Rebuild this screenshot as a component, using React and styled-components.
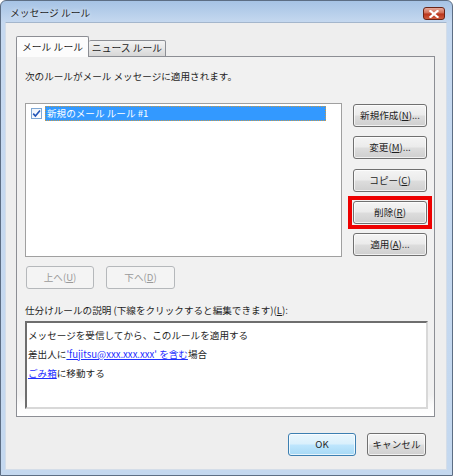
import React from 'react';
import styled, { createGlobalStyle } from 'styled-components';

const GlobalStyle = createGlobalStyle`
  html, body {
    margin: 0;
    padding: 0;
    background: #ffffff;
  }
  body {
    font-family: "Noto Sans CJK JP", "Noto Sans", sans-serif;
  }
`;

const ruleButtons = [
  { label: '新規作成', key: 'N', more: true },
  { label: '変更', key: 'M', more: true },
  { label: 'コピー', key: 'C' },
  { label: '削除', key: 'R', marked: true },
  { label: '適用', key: 'A', more: true },
];

function Mnemonic({ text, k, more }) {
  return (
    <>
      {text}(<u>{k}</u>){more ? '...' : ''}
    </>
  );
}

function App() {
  return (
    <>
      <GlobalStyle />
      <Window>
        <TitleBar>
          <Title>メッセージ ルール</Title>
          <CloseButton>
            <svg width="10" height="8" viewBox="0 0 10 8">
              <path d="M1.5 1 L8.5 7 M8.5 1 L1.5 7" stroke="#ffffff" strokeWidth="2.2" strokeLinecap="square" />
            </svg>
          </CloseButton>
        </TitleBar>

        <Client>
          <TabArea>
            <TabRow>
              <Tab $active>メール ルール</Tab>
              <Tab>ニュース ルール</Tab>
            </TabRow>

            <Panel>
              <Caption>次のルールがメール メッセージに適用されます。</Caption>

              <RulesRow>
                <ListBox>
                  <RuleItem>
                    <CheckBox>
                      <svg width="11" height="11" viewBox="0 0 11 11">
                        <path d="M2.2 5.6 L4.4 8 L9 2.4" stroke="#2255b8" strokeWidth="1.6" fill="none" />
                      </svg>
                    </CheckBox>
                    <RuleName>新規のメール ルール #1</RuleName>
                  </RuleItem>
                </ListBox>

                <SideButtons>
                  {ruleButtons.map((b) => {
                    const btn = (
                      <PushButton key={b.key} $w={74}>
                        <Mnemonic text={b.label} k={b.key} more={b.more} />
                      </PushButton>
                    );
                    return b.marked ? <Marker key={b.key}>{btn}</Marker> : btn;
                  })}
                </SideButtons>
              </RulesRow>

              <MoveRow>
                <PushButton $w={68} $variant="disabled">
                  <Mnemonic text="上へ" k="U" />
                </PushButton>
                <PushButton $w={69} $variant="disabled">
                  <Mnemonic text="下へ" k="D" />
                </PushButton>
              </MoveRow>

              <DescLabel>
                仕分けルールの説明 (下線をクリックすると編集できます)(<u>L</u>):
              </DescLabel>
              <DescBox>
                <DescLine>メッセージを受信してから、このルールを適用する</DescLine>
                <DescLine>
                  差出人に<RuleLink>'fujitsu@xxx.xxx.xxx' を含む</RuleLink>場合
                </DescLine>
                <DescLine>
                  <RuleLink>ごみ箱</RuleLink>に移動する
                </DescLine>
              </DescBox>
            </Panel>

            <Footer>
              <PushButton $w={68} $variant="primary">OK</PushButton>
              <PushButton $w={59}>キャンセル</PushButton>
            </Footer>
          </TabArea>
        </Client>
      </Window>
    </>
  );
}

const Window = styled.div`
  width: 453px;
  height: 476px;
  box-sizing: border-box;
  border: 1px solid #5d6e84;
  border-radius: 6px 6px 0 0;
  background: linear-gradient(180deg, #a6c3e5 0px, #c6d9f0 22px, #c4d8ef 100%);
  display: flex;
  flex-direction: column;
  overflow: hidden;
`;

const TitleBar = styled.div`
  height: 21px;
  display: flex;
  justify-content: space-between;
  padding: 0 7px 0 9px;
`;

const Title = styled.div`
  font-size: 9.8px;
  line-height: 21px;
  color: #1f1f1f;
  padding-top: 2px;
  text-shadow: 0 0 4px rgba(255, 255, 255, 0.9);
`;

const CloseButton = styled.div`
  width: 22px;
  height: 13px;
  margin-top: 6px;
  box-sizing: border-box;
  border: 1px solid #6a2416;
  border-radius: 3px;
  background: linear-gradient(180deg, #e7a99a 0%, #d06a52 48%, #b8321a 52%, #cf5c3e 100%);
  display: flex;
  align-items: center;
  justify-content: center;
`;

const Client = styled.div`
  flex: 1;
  margin: 0 5px 5px 4px;
  background: #eeeeee;
  border: 1px solid #d4dde8;
  border-top-color: #a4b6cc;
  box-sizing: border-box;
  padding: 13px 0 0 10px;
`;

const TabArea = styled.div`
  width: 419px;
  display: flex;
  flex-direction: column;
`;

const TabRow = styled.div`
  display: flex;
  align-items: flex-end;
  height: 21px;
  margin-bottom: -1px;
  position: relative;
  z-index: 1;
`;

const Tab = styled.div`
  box-sizing: border-box;
  width: ${(p) => (p.$active ? 73 : 77)}px;
  height: ${(p) => (p.$active ? 21 : 17)}px;
  border: 1px solid #8c8e94;
  border-bottom: ${(p) => (p.$active ? 'none' : '1px solid #8c8e94')};
  border-left: ${(p) => (p.$active ? '1px solid #8c8e94' : 'none')};
  background: ${(p) =>
    p.$active ? '#fcfcfc' : 'linear-gradient(180deg, #f3f3f3 0%, #e6e6e6 50%, #d7d7d7 100%)'};
  border-radius: 2px 2px 0 0;
  font-size: 9.8px;
  line-height: ${(p) => (p.$active ? 20 : 15)}px;
  color: #1e1e1e;
  text-align: center;
`;

const Panel = styled.div`
  box-sizing: border-box;
  height: 361px;
  border: 1px solid #8c8e94;
  background: linear-gradient(180deg, #f1f1f1 0%, #f1f1f1 94%, #fbfbfb 97%, #ffffff 100%);
  padding: 12px 7px 7px 8px;
  display: flex;
  flex-direction: column;
`;

const Caption = styled.div`
  font-size: 9.6px;
  line-height: 14px;
  color: #1e1e1e;
  margin-bottom: 20px;
`;

const RulesRow = styled.div`
  display: flex;
  align-items: flex-start;
`;

const ListBox = styled.div`
  box-sizing: border-box;
  width: 317px;
  height: 154px;
  border: 1px solid #a0a0a0;
  background: #ffffff;
  padding: 2px 15px 0 5px;
`;

const RuleItem = styled.div`
  display: flex;
  align-items: center;
  height: 15px;
`;

const CheckBox = styled.div`
  box-sizing: border-box;
  width: 11px;
  height: 11px;
  border: 1px solid #7fa8d4;
  background: linear-gradient(135deg, #eef4fb, #ffffff);
  margin-right: 3px;
  display: flex;
  align-items: center;
  justify-content: center;
  svg {
    margin: -1px;
  }
`;

const RuleName = styled.div`
  flex: 1;
  height: 15px;
  background: #3399ff;
  color: #ffffff;
  font-size: 9.6px;
  line-height: 15px;
  padding-left: 2px;
  outline: 1px dotted #c79a4a;
  outline-offset: -1px;
`;

const SideButtons = styled.div`
  margin-left: 11px;
  margin-top: 1px;
  display: flex;
  flex-direction: column;
  gap: 9.3px;
`;

const Marker = styled.div`
  border: 4px solid #ee0000;
  padding: 1px;
  margin: -5px;
`;

const PushButton = styled.div`
  box-sizing: border-box;
  width: ${(p) => p.$w}px;
  height: 23px;
  border-radius: 3px;
  font-size: 9.6px;
  line-height: 21px;
  text-align: center;
  white-space: nowrap;
  border: 1px solid
    ${(p) => (p.$variant === 'disabled' ? '#b5b8bb' : p.$variant === 'primary' ? '#3c7fb1' : '#707070')};
  color: ${(p) => (p.$variant === 'disabled' ? '#9a9a9a' : '#1e1e1e')};
  background: ${(p) =>
    p.$variant === 'disabled'
      ? '#f4f4f4'
      : p.$variant === 'primary'
      ? 'linear-gradient(180deg, #eaf6fd 0%, #d9f0fc 48%, #bee6fd 52%, #a7d9f5 100%)'
      : 'linear-gradient(180deg, #f4f4f4 0%, #ebebeb 48%, #dddddd 52%, #cfcfcf 100%)'};
  box-shadow: inset 0 0 0 1px
    ${(p) => (p.$variant === 'disabled' ? 'transparent' : 'rgba(255, 255, 255, 0.7)')};
  u {
    text-underline-offset: 1px;
  }
`;

const MoveRow = styled.div`
  display: flex;
  gap: 12px;
  margin-top: 9px;
  margin-left: 1px;
`;

const DescLabel = styled.div`
  font-size: 9.6px;
  line-height: 14px;
  color: #1e1e1e;
  margin-top: 14px;
`;

const DescBox = styled.div`
  box-sizing: border-box;
  width: 403px;
  height: 88px;
  margin-top: 4px;
  background: #ffffff;
  border: 2px solid #d8d8d8;
  border-top-color: #6e6e6e;
  border-left-color: #6e6e6e;
  padding: 3px 0 0 1px;
`;

const DescLine = styled.div`
  font-size: 9.6px;
  line-height: 19px;
  color: #1e1e1e;
`;

const RuleLink = styled.span`
  color: #1f2fff;
  text-decoration: underline;
  text-underline-offset: 1px;
`;

const Footer = styled.div`
  display: flex;
  justify-content: flex-end;
  gap: 11px;
  margin-top: 16px;
  padding-right: 9px;
`;

export default App;
